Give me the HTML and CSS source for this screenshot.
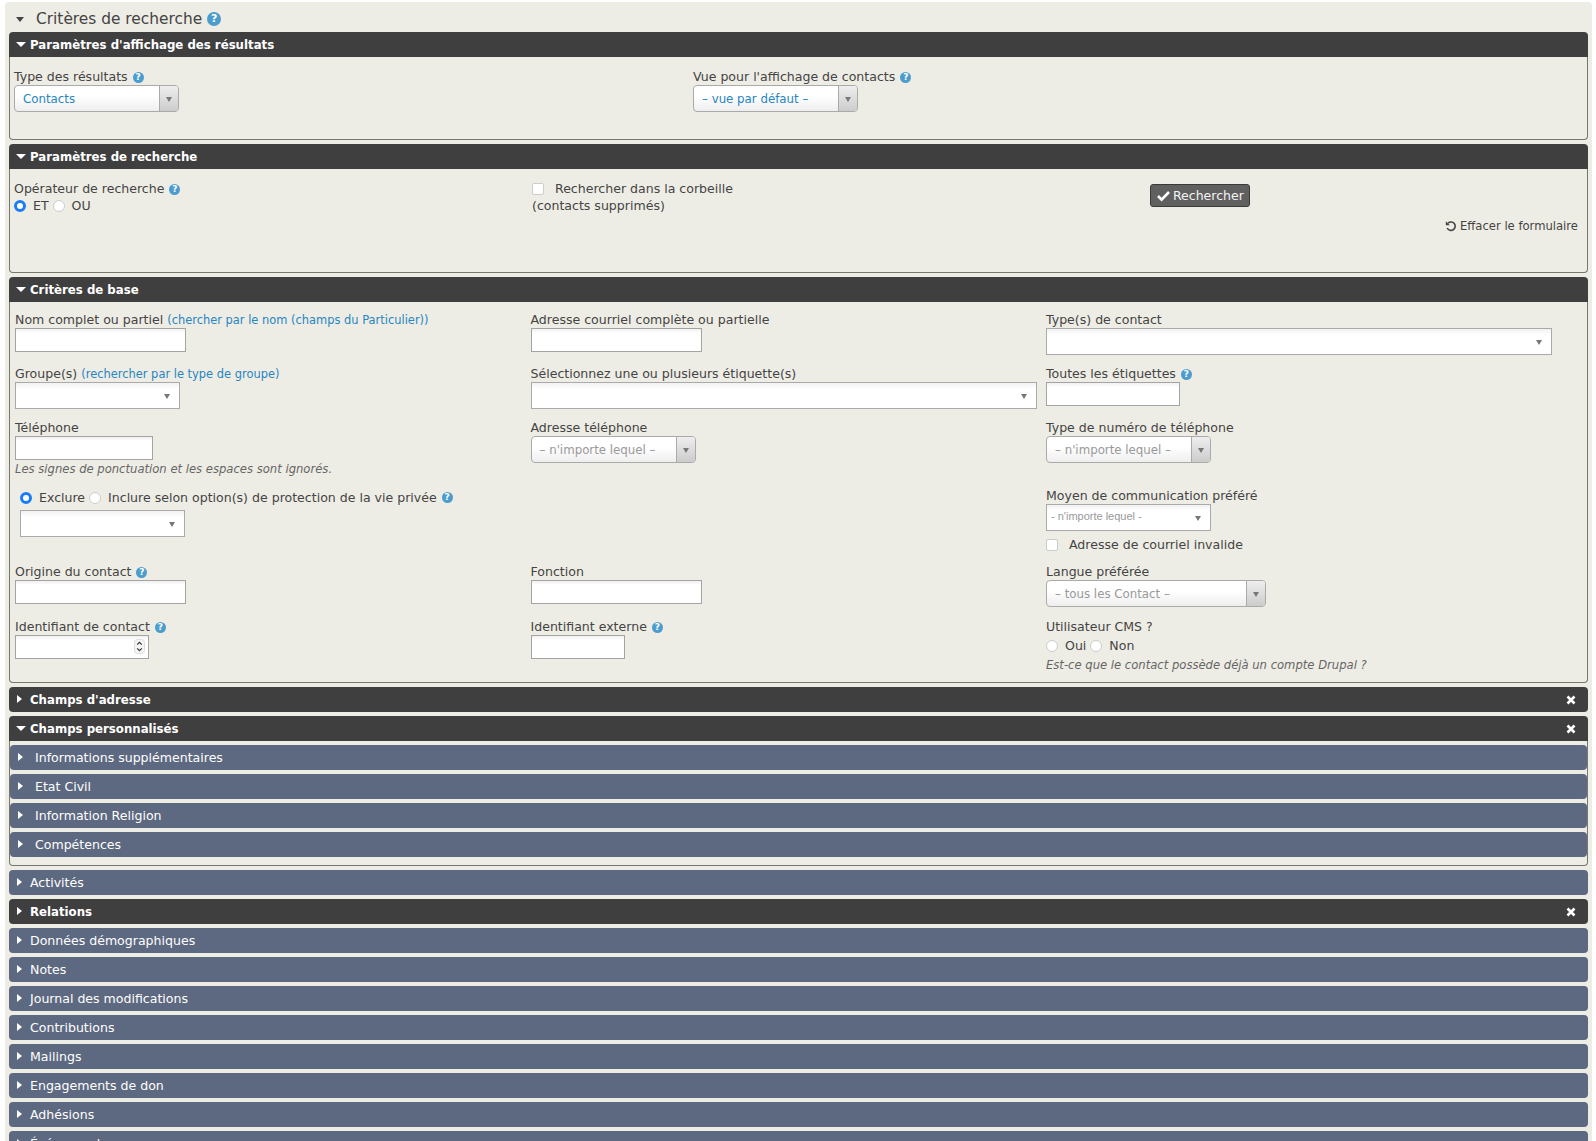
FILE: index.html
```html
<!DOCTYPE html>
<html lang="fr">

<head>
    <meta charset="UTF-8">
    <meta name="viewport" content="width=device-width, initial-scale=1.0">
    <title>Recherche de contacts</title>
    <link rel="stylesheet" href="styles.css">
</head>

<body>
    <div class="panel">
        <div class="panel-title">
            <span class="caret-down caret-title"></span>
            <span>Critères de recherche</span>
            <span class="help help-big">?</span>
        </div>

        <div class="accordion">
            <div class="bar bar-dark bar-open"><span class="caret-down"></span>Paramètres d'affichage des résultats</div>
            <div class="acc-body body-display">
                <div class="grid-display">
                    <div>
                        <label class="lbl">Type des résultats <span class="help">?</span></label>
                        <div class="sel sel-blue"><span>Contacts</span><i class="sel-btn"></i></div>
                    </div>
                    <div>
                        <label class="lbl">Vue pour l'affichage de contacts <span class="help">?</span></label>
                        <div class="sel sel-blue"><span>– vue par défaut –</span><i class="sel-btn"></i></div>
                    </div>
                </div>
            </div>
        </div>

        <div class="accordion">
            <div class="bar bar-dark bar-open"><span class="caret-down"></span>Paramètres de recherche</div>
            <div class="acc-body body-search">
                <div class="grid-search">
                    <div>
                        <label class="lbl">Opérateur de recherche <span class="help">?</span></label>
                        <div class="radios">
                            <input type="radio" name="op" checked><label>ET</label>
                            <input type="radio" name="op"><label>OU</label>
                        </div>
                    </div>
                    <div class="trash">
                        <input type="checkbox"><label>Rechercher dans la corbeille</label><br>
                        <span>(contacts supprimés)</span>
                    </div>
                    <div class="search-actions">
                        <button class="btn-search" type="button">
                            <svg width="13" height="13" viewBox="0 0 13 13"><path d="M1 7l3.6 3.6L12 3" fill="none" stroke="#fff" stroke-width="2.6"/></svg>
                            Rechercher
                        </button>
                        <a class="reset">
                            <svg width="12" height="12" viewBox="0 0 12 12"><path d="M3 3.2A4.2 4.2 0 1 1 2.2 8" fill="none" stroke="#444" stroke-width="1.6"/><path d="M.8 1.2v4h4z" fill="#444"/></svg>
                            Effacer le formulaire
                        </a>
                    </div>
                </div>
            </div>
        </div>

        <div class="accordion">
            <div class="bar bar-dark bar-open"><span class="caret-down"></span>Critères de base</div>
            <div class="acc-body body-base">
                <div class="grid-base">
                    <div>
                        <label class="lbl">Nom complet ou partiel <a class="link">(chercher par le nom (champs du Particulier))</a></label>
                        <input class="txt w-name" type="text">
                    </div>
                    <div>
                        <label class="lbl">Adresse courriel complète ou partielle</label>
                        <input class="txt w-name" type="text">
                    </div>
                    <div>
                        <label class="lbl">Type(s) de contact</label>
                        <div class="flat w-long"><i class="arrow"></i></div>
                    </div>

                    <div>
                        <label class="lbl">Groupe(s) <a class="link">(rechercher par le type de groupe)</a></label>
                        <div class="flat w-std"><i class="arrow"></i></div>
                    </div>
                    <div>
                        <label class="lbl">Sélectionnez une ou plusieurs étiquette(s)</label>
                        <div class="flat w-long"><i class="arrow"></i></div>
                    </div>
                    <div>
                        <label class="lbl">Toutes les étiquettes <span class="help">?</span></label>
                        <input class="txt w-tags" type="text">
                    </div>

                    <div>
                        <label class="lbl">Téléphone</label>
                        <input class="txt w-phone" type="text">
                        <div class="note">Les signes de ponctuation et les espaces sont ignorés.</div>
                    </div>
                    <div>
                        <label class="lbl">Adresse téléphone</label>
                        <div class="sel sel-grey"><span>– n'importe lequel –</span><i class="sel-btn"></i></div>
                    </div>
                    <div>
                        <label class="lbl">Type de numéro de téléphone</label>
                        <div class="sel sel-grey"><span>– n'importe lequel –</span><i class="sel-btn"></i></div>
                    </div>

                    <div class="privacy">
                        <div class="radios">
                            <input type="radio" name="priv" checked><label>Exclure</label>
                            <input type="radio" name="priv"><label>Inclure selon option(s) de protection de la vie privée</label>
                            <span class="help">?</span>
                        </div>
                        <div class="flat w-std privacy-sel"><i class="arrow"></i></div>
                    </div>
                    <div></div>
                    <div class="comm-cell">
                        <label class="lbl">Moyen de communication préféré</label>
                        <div class="flat w-std comm"><span class="comm-text">- n'importe lequel -</span><i class="arrow"></i></div>
                        <div class="bounce">
                            <input type="checkbox"><label>Adresse de courriel invalide</label>
                        </div>
                    </div>

                    <div>
                        <label class="lbl">Origine du contact <span class="help">?</span></label>
                        <input class="txt w-name" type="text">
                    </div>
                    <div>
                        <label class="lbl">Fonction</label>
                        <input class="txt w-name" type="text">
                    </div>
                    <div>
                        <label class="lbl">Langue préférée</label>
                        <div class="sel sel-grey sel-wide"><span>– tous les Contact –</span><i class="sel-btn"></i></div>
                    </div>

                    <div>
                        <label class="lbl">Identifiant de contact <span class="help">?</span></label>
                        <div class="number-wrap">
                            <input class="txt w-id" type="text">
                            <svg class="spinner" width="11" height="15" viewBox="0 0 11 15"><rect x=".5" y=".5" width="10" height="14" rx="3" fill="#f4f4f4" stroke="#ddd"/><path d="M3.2 5.6l2.3-2.3 2.3 2.3M3.2 9.4l2.3 2.3 2.3-2.3" fill="none" stroke="#333" stroke-width="1.1"/></svg>
                        </div>
                    </div>
                    <div>
                        <label class="lbl">Identifiant externe <span class="help">?</span></label>
                        <input class="txt w-ext" type="text">
                    </div>
                    <div>
                        <label class="lbl">Utilisateur CMS ?</label>
                        <div class="radios radios-cms">
                            <input type="radio" name="cms"><label>Oui</label>
                            <input type="radio" name="cms"><label>Non</label>
                        </div>
                        <div class="note note-cms">Est-ce que le contact possède déjà un compte Drupal ?</div>
                    </div>
                </div>
            </div>
        </div>

        <div class="accordion">
            <div class="bar bar-dark bar-closed"><span class="caret-right"></span>Champs d'adresse
                <svg class="close" width="10" height="10" viewBox="0 0 10 10"><path d="M1.5 1.5l7 7M8.5 1.5l-7 7" stroke="#fff" stroke-width="2.6"/></svg>
            </div>
        </div>

        <div class="accordion">
            <div class="bar bar-dark bar-open"><span class="caret-down"></span>Champs personnalisés
                <svg class="close" width="10" height="10" viewBox="0 0 10 10"><path d="M1.5 1.5l7 7M8.5 1.5l-7 7" stroke="#fff" stroke-width="2.6"/></svg>
            </div>
            <div class="acc-body body-custom">
                <div class="bar bar-sub"><span class="caret-right"></span>Informations supplémentaires</div>
                <div class="bar bar-sub"><span class="caret-right"></span>Etat Civil</div>
                <div class="bar bar-sub"><span class="caret-right"></span>Information Religion</div>
                <div class="bar bar-sub"><span class="caret-right"></span>Compétences</div>
            </div>
        </div>

        <div class="bar bar-blue bar-closed"><span class="caret-right"></span>Activités</div>
        <div class="bar bar-dark bar-closed"><span class="caret-right"></span>Relations
            <svg class="close" width="10" height="10" viewBox="0 0 10 10"><path d="M1.5 1.5l7 7M8.5 1.5l-7 7" stroke="#fff" stroke-width="2.6"/></svg>
        </div>
        <div class="bar bar-blue bar-closed"><span class="caret-right"></span>Données démographiques</div>
        <div class="bar bar-blue bar-closed"><span class="caret-right"></span>Notes</div>
        <div class="bar bar-blue bar-closed"><span class="caret-right"></span>Journal des modifications</div>
        <div class="bar bar-blue bar-closed"><span class="caret-right"></span>Contributions</div>
        <div class="bar bar-blue bar-closed"><span class="caret-right"></span>Mailings</div>
        <div class="bar bar-blue bar-closed"><span class="caret-right"></span>Engagements de don</div>
        <div class="bar bar-blue bar-closed"><span class="caret-right"></span>Adhésions</div>
        <div class="bar bar-blue bar-closed"><span class="caret-right"></span>Événements</div>
    </div>
</body>

</html>
```

FILE: styles.css
```css
html,
body {
    height: 1141px;
    overflow: hidden;
}

body {
    margin: 0;
    padding: 2px 4px 0 5px;
    background-color: #fff;
    color: #444;
    font-family: "DejaVu Sans", sans-serif;
    font-size: 12.55px;
    box-sizing: border-box;
}

.panel {
    display: flex;
    flex-direction: column;
    gap: 4px;
    height: 1200px;
    padding: 0 4px;
    background-color: #eeede5;
    border-radius: 4px 4px 0 0;
}

.panel-title {
    display: flex;
    align-items: center;
    box-sizing: border-box;
    height: 30px;
    margin-bottom: -4px;
    padding-top: 3px;
    font-size: 15.4px;
}

.panel-title .caret-title {
    margin: 1px 12px 0 7px;
    border-left-width: 4.5px;
    border-right-width: 4.5px;
    border-top: 5px solid #444;
}

/* bars */
.bar {
    position: relative;
    display: flex;
    align-items: center;
    box-sizing: border-box;
    height: 25px;
    padding-left: 21px;
    color: #fff;
    flex-shrink: 0;
}

.bar-dark {
    background-color: #3f3f3f;
    font-size: 11.75px;
    font-weight: bold;
}

.bar-blue,
.bar-sub {
    background-color: #5d6980;
}

.bar-open {
    border-radius: 4px 4px 0 0;
}

.bar-closed {
    border-radius: 4px;
}

.bar-sub {
    padding-left: 25px;
    margin-bottom: 4px;
    border-radius: 4px;
}

.bar-sub:last-child {
    margin-bottom: 0;
}

.caret-down {
    width: 0;
    height: 0;
    border-left: 5px solid transparent;
    border-right: 5px solid transparent;
    border-top: 5px solid #fff;
}

.bar .caret-down {
    position: absolute;
    left: 7px;
    top: 10px;
}

.caret-right {
    position: absolute;
    left: 8px;
    top: 8px;
    width: 0;
    height: 0;
    border-top: 4.5px solid transparent;
    border-bottom: 4.5px solid transparent;
    border-left: 5px solid #fff;
}

.close {
    position: absolute;
    right: 12px;
    top: 8px;
}

/* accordion bodies */
.acc-body {
    box-sizing: border-box;
    border: 1px solid #77776f;
    border-top: none;
    border-radius: 0 0 4px 4px;
}

.body-display {
    height: 83px;
    padding: 11px 4px 0;
}

.body-search {
    height: 104px;
    padding: 11px 4px 0;
}

.body-base {
    height: 381px;
    padding: 9px 5px 0;
}

.body-custom {
    height: 125px;
    padding-top: 4px;
}

.grid-display {
    display: grid;
    grid-template-columns: 679px 1fr;
}

.grid-search {
    display: grid;
    grid-template-columns: 518px 618px 1fr;
}

.grid-base {
    display: grid;
    grid-template-columns: 515.5px 515.5px 1fr;
    grid-template-rows: 54px 54px 69px 75px 55px auto;
}

.lbl {
    display: block;
    height: 17px;
    line-height: 17px;
    white-space: nowrap;
}

.link {
    color: #2786c2;
    font-size: 11.45px;
}

.help {
    display: inline-flex;
    align-items: center;
    justify-content: center;
    width: 11px;
    height: 11px;
    margin-left: 1px;
    border-radius: 50%;
    background-color: #4c9ccd;
    color: #fff;
    font-size: 9px;
    font-weight: bold;
    line-height: 11px;
    vertical-align: 1px;
}

.help-big {
    width: 14px;
    height: 14px;
    margin-left: 5px;
    font-size: 11px;
}

/* form controls */
.txt {
    display: block;
    box-sizing: border-box;
    height: 24px;
    margin: 0;
    padding: 0 4px;
    border: 1px solid #a4a4a4;
    background: linear-gradient(#f0f0f0, #fff 4px);
    font-size: 12.5px;
}

.w-name {
    width: 171px;
}

.w-phone {
    width: 138px;
}

.w-tags {
    width: 134px;
}

.w-id {
    width: 134px;
}

.w-ext {
    width: 94px;
}

.w-std {
    width: 165px;
}

.w-long {
    width: 506px;
}

.flat {
    position: relative;
    box-sizing: border-box;
    height: 27px;
    border: 1px solid #aaa;
    background: linear-gradient(#f2f2f2, #fff 6px);
}

.arrow {
    position: absolute;
    right: 9px;
    top: 11px;
    width: 0;
    height: 0;
    border-left: 3px solid transparent;
    border-right: 3px solid transparent;
    border-top: 5px solid #777;
}

.sel {
    position: relative;
    display: flex;
    align-items: center;
    box-sizing: border-box;
    width: 165px;
    height: 27px;
    padding-left: 8px;
    border: 1px solid #aaa;
    border-radius: 4px;
    background: linear-gradient(#fff 40%, #eee);
    font-size: 11.8px;
}

.sel-blue {
    color: #2786c2;
}

.sel-grey {
    color: #999;
}

.sel-wide {
    width: 220px;
}

.sel-btn {
    position: absolute;
    right: 0;
    top: 0;
    bottom: 0;
    width: 18px;
    border-left: 1px solid #aaa;
    border-radius: 0 3px 3px 0;
    background: linear-gradient(#eee, #ccc);
}

.sel-btn::after {
    content: "";
    position: absolute;
    left: 6px;
    top: 11px;
    border-left: 3px solid transparent;
    border-right: 3px solid transparent;
    border-top: 5px solid #777;
}

.radios {
    display: flex;
    align-items: center;
    height: 17px;
}

.radios input,
.trash input,
.bounce input {
    appearance: none;
    box-sizing: border-box;
    flex-shrink: 0;
    margin: 0;
    width: 12px;
    height: 12px;
    border: 1px solid #ccc;
    background-color: #fff;
}

.radios input {
    border-radius: 50%;
}

.radios input:checked {
    border: 3.5px solid #1a7cf7;
}

.radios label {
    margin: 0 4px 0 7px;
}

.trash input,
.bounce input {
    border-radius: 2px;
    vertical-align: -2px;
}

.trash label,
.bounce label {
    margin-left: 11px;
}

.trash {
    line-height: 17px;
}

.search-actions {
    display: flex;
    flex-direction: column;
    align-items: flex-start;
}

.btn-search {
    display: flex;
    align-items: center;
    gap: 3px;
    box-sizing: border-box;
    height: 23px;
    margin-top: 4px;
    padding: 0 5px 0 6px;
    border: 1px solid #3a3a3a;
    border-radius: 3px;
    background-color: #606060;
    color: #f4f4f4;
    font-family: "DejaVu Sans", sans-serif;
    font-size: 12.5px;
}

.reset {
    align-self: flex-end;
    display: flex;
    align-items: center;
    gap: 3px;
    margin: 12px 5px 0 0;
    font-size: 11.6px;
}

.note {
    margin-top: 1px;
    color: #666;
    font-size: 11.6px;
    font-style: italic;
    line-height: 16px;
}

.privacy {
    padding: 1px 0 0 5px;
}

.privacy-sel {
    margin-top: 4px;
}

.comm-cell .lbl {
    margin-top: -1px;
}

.comm {
    height: 27px;
}

.comm-text {
    position: absolute;
    left: 4px;
    top: 5px;
    color: #999;
    font-family: "Liberation Sans", sans-serif;
    font-size: 11px;
}

.bounce {
    margin-top: 5px;
    line-height: 17px;
}

.number-wrap {
    position: relative;
    width: 134px;
}

.spinner {
    position: absolute;
    right: 4px;
    top: 4px;
}

.radios-cms {
    margin-top: 2px;
}

.note-cms {
    margin-top: 3px;
}
```
